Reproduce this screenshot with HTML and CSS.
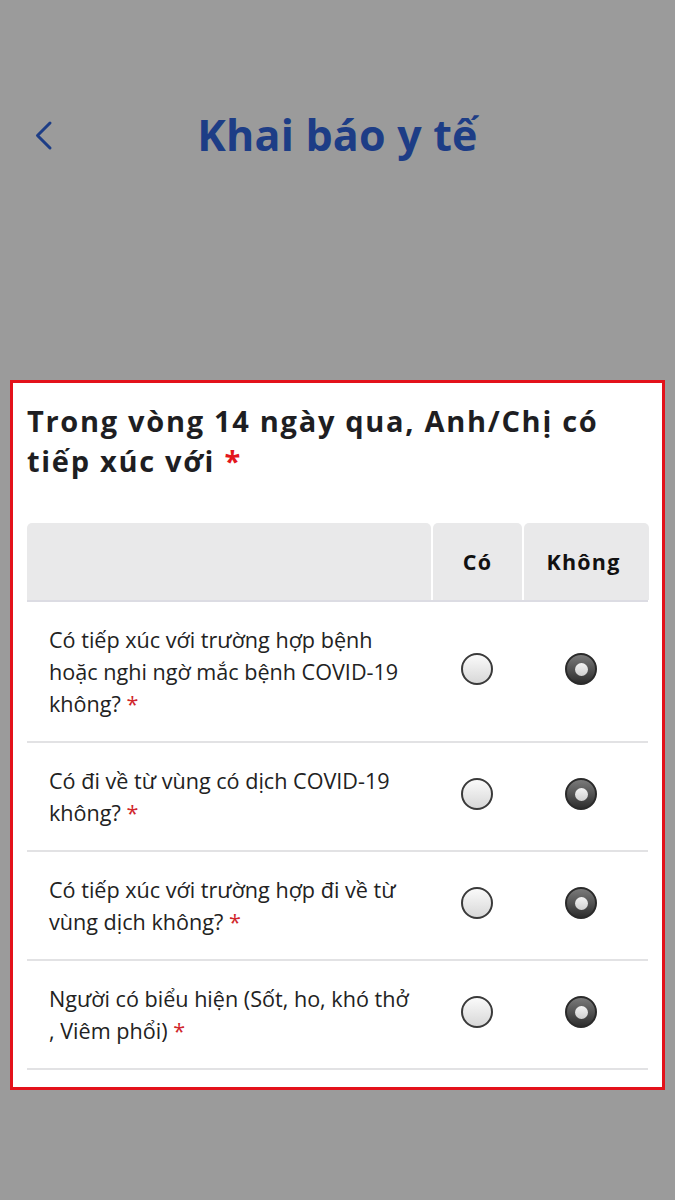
FILE: index.html
```html
<!DOCTYPE html>
<html lang="vi">
<head>
<meta charset="utf-8">
<title>Khai báo y tế</title>
<link rel="stylesheet" href="styles.css">
</head>
<body>
<div class="page">
  <header class="topbar">
    <span class="back">
      <svg width="20" height="32" viewBox="0 0 20 32"><path d="M16 3 L3.5 15.5 L16 28" fill="none" stroke="#1d3d86" stroke-width="3" stroke-linecap="round" stroke-linejoin="round"/></svg>
    </span>
    <h1 class="title">Khai báo y tế</h1>
  </header>

  <section class="card">
    <h2 class="question">Trong vòng 14 ngày qua, Anh/Chị có tiếp xúc với <span class="req">*</span></h2>
    <div class="table">
      <div class="thead">
        <div class="th th-label"></div>
        <div class="th">Có</div>
        <div class="th last">Không</div>
      </div>
      <div class="row">
        <div class="label">Có tiếp xúc với trường hợp bệnh hoặc nghi ngờ mắc bệnh COVID-19 không? <span class="req-sm">*</span></div>
        <div class="cell"><span class="radio"></span></div>
        <div class="cell last"><span class="radio checked"></span></div>
      </div>
      <div class="row">
        <div class="label">Có đi về từ vùng có dịch COVID-19 không? <span class="req-sm">*</span></div>
        <div class="cell"><span class="radio"></span></div>
        <div class="cell last"><span class="radio checked"></span></div>
      </div>
      <div class="row">
        <div class="label">Có tiếp xúc với trường hợp đi về từ vùng dịch không? <span class="req-sm">*</span></div>
        <div class="cell"><span class="radio"></span></div>
        <div class="cell last"><span class="radio checked"></span></div>
      </div>
      <div class="row">
        <div class="label">Người có biểu hiện (Sốt, ho, khó thở , Viêm phổi) <span class="req-sm">*</span></div>
        <div class="cell"><span class="radio"></span></div>
        <div class="cell last"><span class="radio checked"></span></div>
      </div>
    </div>
  </section>
</div>
</body>
</html>
```
FILE: styles.css
```css
* { box-sizing: border-box; }
html, body {
  margin: 0;
  padding: 0;
  background: #9b9b9b;
}
body {
  font-family: "Open Sans", "Noto Sans", sans-serif;
  width: 675px;
  height: 1200px;
  overflow: hidden;
}
.page {
  padding: 0 10px;
}
.topbar {
  height: 380px;
  position: relative;
  display: flex;
  justify-content: center;
  padding-top: 102px;
}
.back {
  position: absolute;
  left: 24px;
  top: 120px;
  width: 20px;
  height: 32px;
}
.back svg { display: block; }
.title {
  margin: 0;
  font-size: 43px;
  font-weight: 700;
  color: #1d3d86;
  line-height: 66px;
  letter-spacing: 0.2px;
}
.card {
  background: #fff;
  border: 3px solid #e3121b;
  padding: 18px 14px 18px 14px;
  height: 710px;
}
.question {
  margin: 0 0 42px 0;
  font-size: 29px;
  font-weight: 700;
  line-height: 40px;
  letter-spacing: 1.7px;
  color: #1e1e22;
}
.req { color: #e3161d; }
.req-sm { color: #d0262b; }
.table {
  display: flex;
  flex-direction: column;
}
.thead {
  display: grid;
  grid-template-columns: 404px 89px 125px;
  gap: 2px;
  height: 79px;
  border-bottom: 2px solid #dcdce3;
}
.th {
  background: #e9e9ea;
  border-radius: 5px 5px 0 0;
  display: flex;
  align-items: center;
  justify-content: center;
  font-size: 21.5px;
  font-weight: 700;
  letter-spacing: 1.2px;
  color: #111;
}
.th.last { padding-right: 6px; }
.row {
  display: grid;
  grid-template-columns: 404px 91px 126px;
  align-items: center;
  border-bottom: 2px solid #e2e2e4;
  padding: 22px 0 21px 0;
}
.label {
  padding-left: 22px;
  padding-right: 13px;
  font-size: 21.6px;
  line-height: 32px;
  color: #222;
}
.cell {
  display: flex;
  justify-content: center;
  margin-bottom: 6px;
}
.cell.last { padding-right: 8px; }
.radio {
  width: 32px;
  height: 32px;
  border-radius: 50%;
  border: 2px solid #3a3a3a;
  background: linear-gradient(#fafafa, #d8d8d8);
  display: flex;
  align-items: center;
  justify-content: center;
}
.radio.checked {
  border-color: #2a2a2a;
  background: linear-gradient(#7a7a7a, #2e2e2e);
}
.radio.checked::after {
  content: "";
  width: 13px;
  height: 13px;
  border-radius: 50%;
  background: linear-gradient(#f4f4f4, #cfcfcf);
}
```
